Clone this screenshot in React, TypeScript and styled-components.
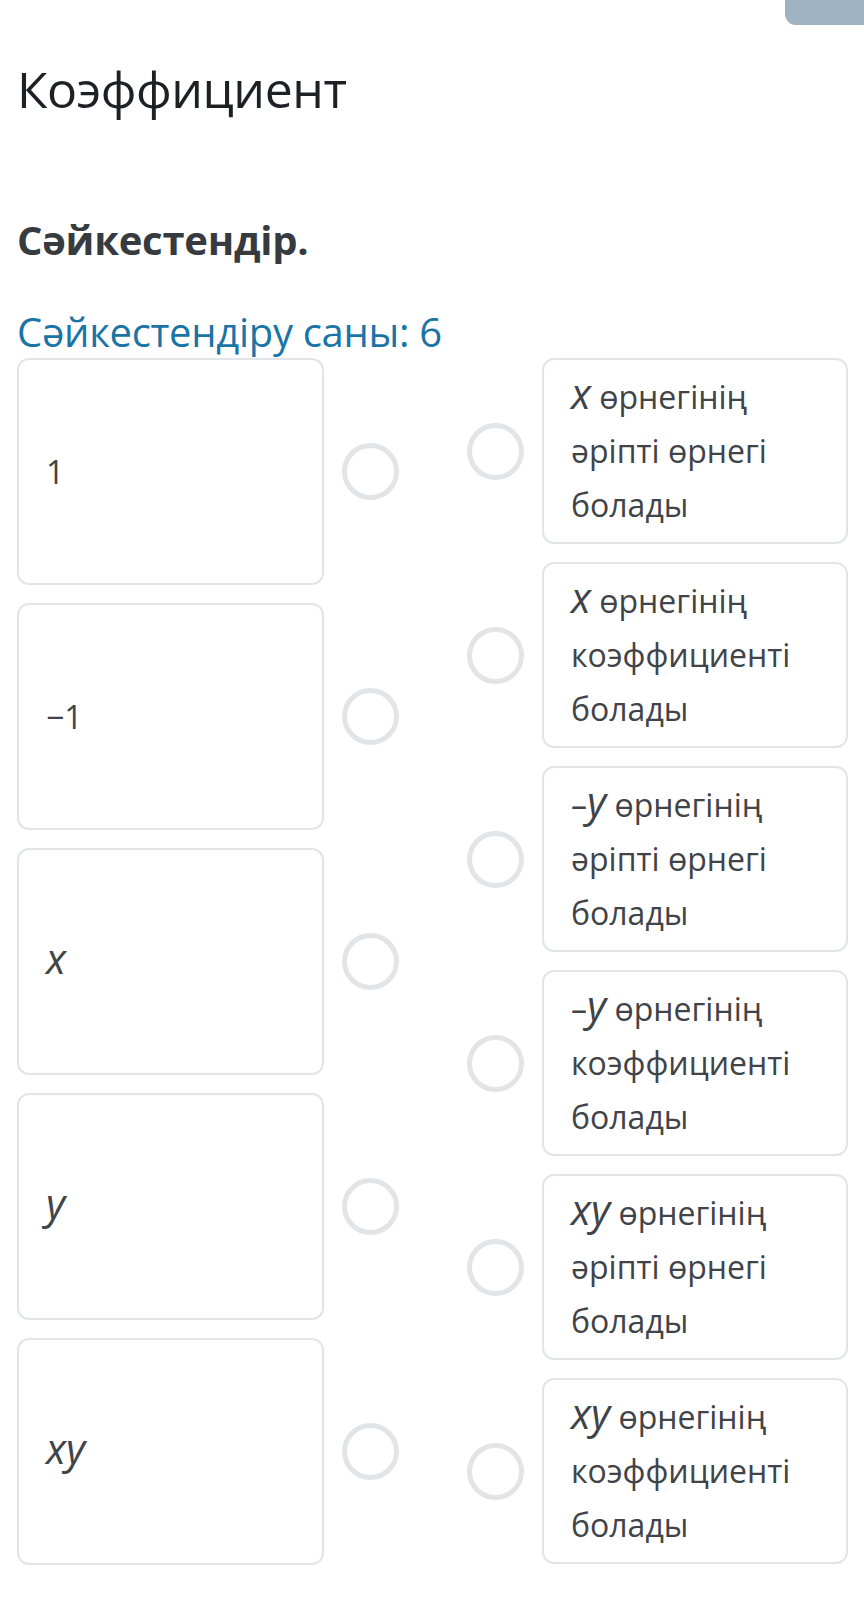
import styled, { createGlobalStyle } from "styled-components";

const GlobalStyle = createGlobalStyle`
  body {
    margin: 0;
    background: #ffffff;
    font-family: "Open Sans", "Noto Sans", sans-serif;
    color: #404448;
  }
`;

const Page = styled.div`
  width: 864px;
  min-height: 1618px;
  background: #ffffff;
`;

const TopBar = styled.div`
  display: flex;
  justify-content: flex-end;
  height: 25px;
`;

const Tab = styled.div`
  width: 79px;
  height: 25px;
  background: #9fb3c2;
  border-bottom-left-radius: 11px;
`;

const Content = styled.div`
  padding: 0 16px 0 17px;
`;

const Title = styled.h1`
  margin: 34px 0 0;
  font-size: 50px;
  line-height: 60px;
  font-weight: 400;
  letter-spacing: -0.5px;
  color: #1d2125;
`;

const Prompt = styled.h2`
  margin: 97px 0 0;
  font-size: 40px;
  line-height: 48px;
  font-weight: 700;
  letter-spacing: -0.25px;
  color: #373a3e;
`;

const CountLabel = styled.div`
  margin: 44px 0 0;
  font-size: 40px;
  line-height: 48px;
  letter-spacing: -0.3px;
  color: #1a74a6;
`;

const MatchArea = styled.div`
  display: flex;
  justify-content: space-between;
  margin-top: 2px;
`;

const Column = styled.div`
  display: flex;
  flex-direction: column;
  gap: 18px;
`;

const Row = styled.div`
  display: flex;
  align-items: center;
  gap: 18px;
`;

const Card = styled.div<{ $side: "left" | "right" }>`
  box-sizing: border-box;
  width: ${p => (p.$side === "left" ? "307px" : "306px")};
  height: ${p => (p.$side === "left" ? "227px" : "186px")};
  border: 2px solid #e2e4e7;
  border-radius: 12px;
  padding: ${p => (p.$side === "left" ? "0 27px" : "10px 27px")};
  display: flex;
  align-items: center;
  font-size: 32px;
  line-height: 54px;
  color: #404448;
`;

const Circle = styled.div`
  box-sizing: border-box;
  flex: none;
  width: 57px;
  height: 57px;
  border: 5px solid #e2e5e8;
  border-radius: 50%;
`;

const Var = styled.i`
  font-size: 1.3em;
  line-height: 1;
  font-style: italic;
`;

const Lead = styled.span`
  white-space: nowrap;
`;

type Term = { pre?: string; v?: string; head?: string; rest?: string };

const leftItems: Term[] = [
  { head: "1" },
  { head: "−1" },
  { v: "x" },
  { v: "y" },
  { v: "xy" },
];

const rightItems: Term[] = [
  { v: "x", head: " өрнегінің", rest: "әріпті өрнегі болады" },
  { v: "x", head: " өрнегінің", rest: "коэффициенті болады" },
  { pre: "–", v: "y", head: " өрнегінің", rest: "әріпті өрнегі болады" },
  { pre: "–", v: "y", head: " өрнегінің", rest: "коэффициенті болады" },
  { v: "xy", head: " өрнегінің", rest: "әріпті өрнегі болады" },
  { v: "xy", head: " өрнегінің", rest: "коэффициенті болады" },
];

function TermText({ term }: { term: Term }) {
  return (
    <span>
      <Lead>
        {term.pre}
        {term.v && <Var>{term.v}</Var>}
        {term.head}
      </Lead>
      {term.rest && " "}
      {term.rest}
    </span>
  );
}

export default function App() {
  return (
    <Page>
      <GlobalStyle />
      <TopBar>
        <Tab />
      </TopBar>
      <Content>
        <Title>Коэффициент</Title>
        <Prompt>Сәйкестендір.</Prompt>
        <CountLabel>Сәйкестендіру саны: 6</CountLabel>
        <MatchArea>
          <Column>
            {leftItems.map((item, i) => (
              <Row key={i}>
                <Card $side="left">
                  <TermText term={item} />
                </Card>
                <Circle />
              </Row>
            ))}
          </Column>
          <Column>
            {rightItems.map((item, i) => (
              <Row key={i}>
                <Circle />
                <Card $side="right">
                  <TermText term={item} />
                </Card>
              </Row>
            ))}
          </Column>
        </MatchArea>
      </Content>
    </Page>
  );
}
